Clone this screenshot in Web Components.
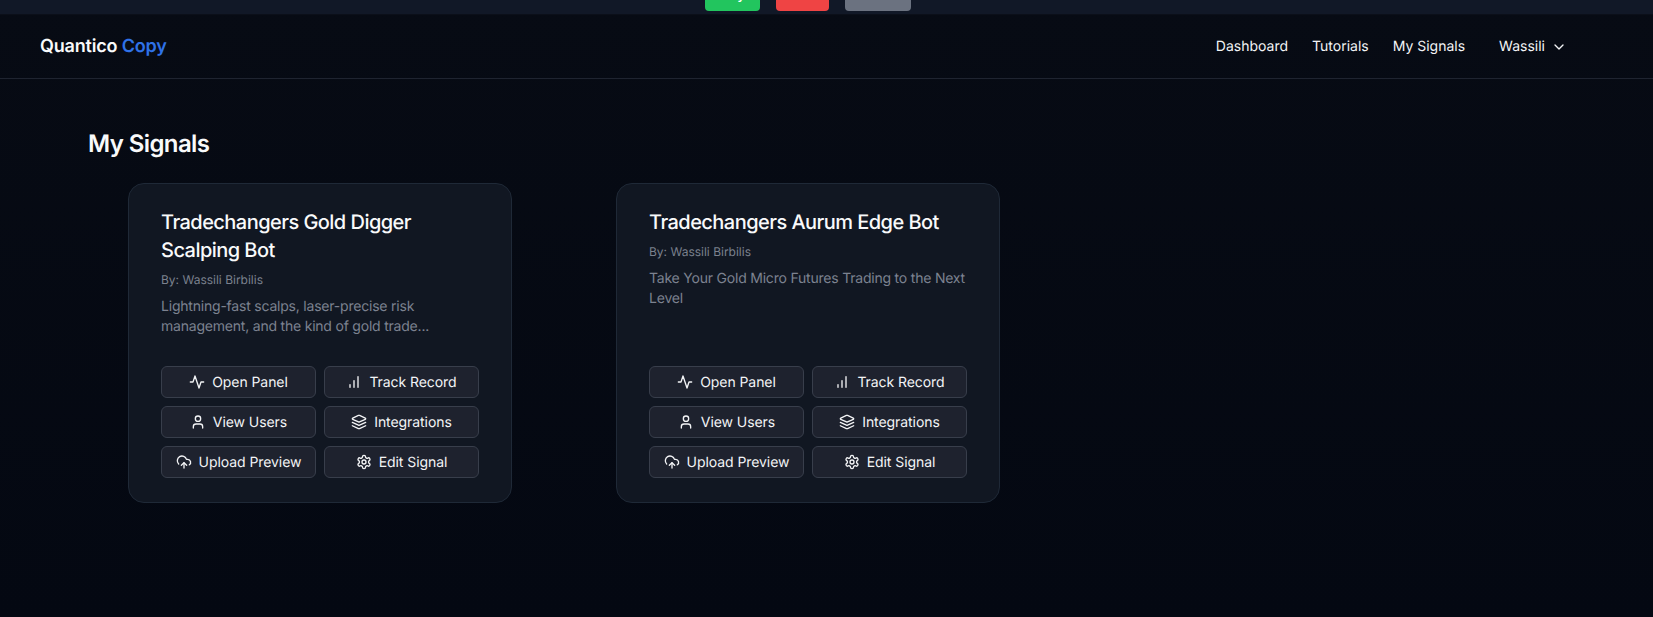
<!DOCTYPE html>
<html lang="en">
<head>
<meta charset="utf-8">
<title>My Signals</title>
<style>
html, body {
  margin: 0;
  height: 100%;
}
body {
  background:     linear-gradient(#070b14, #040812);
  font-family:    Inter, "Liberation Sans", sans-serif;
  color:          #f3f4f6;
  text-rendering: geometricPrecision;
}
</style>
</head>
<body>
<trade-bar></trade-bar>
<top-nav></top-nav>
<signals-page></signals-page>

<script>
const icons = {
  activity: `<path d="M22 12h-4l-3 9L9 3l-3 9H2"/>`,
  chart:    `<path d="M6 20v-4"/><path d="M12 20V10"/><path d="M18 20V4"/>`,
  user:     `<path d="M19 21v-2a4 4 0 0 0-4-4H9a4 4 0 0 0-4 4v2"/><circle cx="12" cy="7" r="4"/>`,
  layers:   `<path d="M12.83 2.18a2 2 0 0 0-1.66 0L2.6 6.08a1 1 0 0 0 0 1.83l8.58 3.91a2 2 0 0 0 1.66 0l8.58-3.9a1 1 0 0 0 0-1.83Z"/><path d="m22 17.65-9.17 4.16a2 2 0 0 1-1.66 0L2 17.65"/><path d="m22 12.65-9.17 4.16a2 2 0 0 1-1.66 0L2 12.65"/>`,
  upload:   `<path d="M12 13v8"/><path d="M4 14.9A7 7 0 1 1 15.7 8h1.8a4.5 4.5 0 0 1 2.5 8.2"/><path d="m8 17 4-4 4 4"/>`,
  gear:     `<path d="M12.22 2h-.44a2 2 0 0 0-2 2v.18a2 2 0 0 1-1 1.73l-.43.25a2 2 0 0 1-2 0l-.15-.08a2 2 0 0 0-2.73.73l-.22.38a2 2 0 0 0 .73 2.73l.15.1a2 2 0 0 1 1 1.72v.51a2 2 0 0 1-1 1.74l-.15.09a2 2 0 0 0-.73 2.73l.22.38a2 2 0 0 0 2.73.73l.15-.08a2 2 0 0 1 2 0l.43.25a2 2 0 0 1 1 1.73V20a2 2 0 0 0 2 2h.44a2 2 0 0 0 2-2v-.18a2 2 0 0 1 1-1.73l.43-.25a2 2 0 0 1 2 0l.15.08a2 2 0 0 0 2.73-.73l.22-.39a2 2 0 0 0-.73-2.73l-.15-.08a2 2 0 0 1-1-1.74v-.5a2 2 0 0 1 1-1.74l.15-.09a2 2 0 0 0 .73-2.73l-.22-.38a2 2 0 0 0-2.73-.73l-.15.08a2 2 0 0 1-2 0l-.43-.25a2 2 0 0 1-1-1.73V4a2 2 0 0 0-2-2z"/><circle cx="12" cy="12" r="3"/>`,
  chevron:  `<path d="m6 9 6 6 6-6"/>`,
}

const svgIcon = (name, size = 16) => `<svg width="${size}" height="${size}" viewBox="0 0 24 24" fill="none" stroke="currentColor" stroke-width="2" stroke-linecap="round" stroke-linejoin="round">${icons[name]}</svg>`

class TradeBar extends HTMLElement {
  constructor() {
    super()
    this.attachShadow({mode: 'open'})
    this.shadowRoot.innerHTML = `
<style>
:host {
  display:         flex;
  justify-content: center;
  align-items:     flex-end;
  gap:             16px;
  height:          14px;
  padding:         0 37px 3px 0;
  box-sizing:      border-box;
  overflow:        hidden;
  background:      #111827;
}
button {
  flex:          none;
  height:        36px;
  padding:       0;
  border:        none;
  border-radius: 4px;
  color:         white;
  font:          500 14px Inter, "Liberation Sans", sans-serif;
}
.buy   { width: 55px; background: #22c55e; }
.sell  { width: 53px; background: #ef4444; }
.close { width: 66px; background: #6b7280; }
</style>
<button class='buy'>Buy</button>
<button class='sell'></button>
<button class='close'></button>`
  }
}

class TopNav extends HTMLElement {
  constructor() {
    super()
    this.attachShadow({mode: 'open'})
    this.shadowRoot.innerHTML = `
<style>
:host {
  display:       flex;
  align-items:   center;
  height:        65px;
  padding:       0 86px 0 40px;
  box-sizing:    border-box;
  border-top:    1px solid #0b0f19;
  border-bottom: 1px solid #1f2430;
}
.logo {
  font-size:      18px;
  font-weight:    600;
  letter-spacing: -0.01em;
  color:          #f9fafb;
}
.logo span {
  color: #2f72e8;
}
nav {
  margin-left: auto;
  display:     flex;
  align-items: center;
  gap:         24px;
  font-size:   14px;
  font-weight: 400;
  color:       #f3f4f6;
}
.user {
  display:     flex;
  align-items: center;
  gap:         6px;
  margin-left: 10px;
}
</style>
<div class='logo'>Quantico <span>Copy</span></div>
<nav>
  <span>Dashboard</span>
  <span>Tutorials</span>
  <span>My Signals</span>
  <span class='user'>Wassili ${svgIcon('chevron')}</span>
</nav>`
  }
}

class ActionButton extends HTMLElement {
  constructor() {
    super()
    this.attachShadow({mode: 'open'})
    this.shadowRoot.innerHTML = `
<style>
:host {
  display:         flex;
  align-items:     center;
  justify-content: center;
  gap:             7px;
  height:          32px;
  box-sizing:      border-box;
  border:          1px solid #383e4b;
  border-radius:   6px;
  background:      #1e222e;
  color:           #f3f4f6;
  font-size:       14px;
  font-weight:     400;
  letter-spacing:  -0.005em;
}
svg { flex: none; }
</style>
${svgIcon(this.getAttribute('icon'))}<slot></slot>`
  }
}

class SignalCard extends HTMLElement {
  constructor() {
    super()
    this.attachShadow({mode: 'open'})
    this.shadowRoot.innerHTML = `
<style>
:host {
  display:        flex;
  flex-direction: column;
  width:          384px;
  height:         320px;
  padding:        24px 32px;
  box-sizing:     border-box;
  border:         1px solid #1f2937;
  border-radius:  16px;
  background:     #111722;
}
h3 {
  margin:         0 0 8px;
  font-size:      20px;
  line-height:    28px;
  font-weight:    550;
  letter-spacing: -0.027em;
  color:          #f9fafb;
}
.by {
  font-size:   12px;
  line-height: 16px;
  color:       #7b818e;
}
.desc {
  margin:         9px 0 0;
  font-size:      14px;
  line-height:    20px;
  font-weight:    400;
  letter-spacing: -0.015em;
  color:          #7c8290;
}
.actions {
  margin-top:            auto;
  display:               grid;
  grid-template-columns: repeat(2, 155px);
  gap:                   8px;
}
</style>
<h3><slot name='title'></slot></h3>
<div class='by'><slot name='by'></slot></div>
<p class='desc'><slot name='desc'></slot></p>
<div class='actions'>
  <action-button icon='activity'>Open Panel</action-button>
  <action-button icon='chart'>Track Record</action-button>
  <action-button icon='user'>View Users</action-button>
  <action-button icon='layers'>Integrations</action-button>
  <action-button icon='upload'>Upload Preview</action-button>
  <action-button icon='gear'>Edit Signal</action-button>
</div>`
  }
}

class SignalsPage extends HTMLElement {
  constructor() {
    super()
    this.attachShadow({mode: 'open'})
    this.shadowRoot.innerHTML = `
<style>
:host {
  display: block;
  padding: 49px 88px;
}
h2 {
  margin:         0 0 23px;
  font-size:      24px;
  line-height:    32px;
  font-weight:    600;
  letter-spacing: -0.025em;
  color:          #f9fafb;
}
.cards {
  display:      flex;
  gap:          104px;
  padding-left: 40px;
}
</style>
<h2>My Signals</h2>
<div class='cards'>
  <signal-card>
    <span slot='title'>Tradechangers Gold Digger Scalping Bot</span>
    <span slot='by'>By: Wassili Birbilis</span>
    <span slot='desc'>Lightning-fast scalps, laser-precise risk management, and the kind of gold trade...</span>
  </signal-card>
  <signal-card>
    <span slot='title'>Tradechangers Aurum Edge Bot</span>
    <span slot='by'>By: Wassili Birbilis</span>
    <span slot='desc'>Take Your Gold Micro Futures Trading to the Next Level</span>
  </signal-card>
</div>`
  }
}

customElements.define('trade-bar', TradeBar)
customElements.define('top-nav', TopNav)
customElements.define('action-button', ActionButton)
customElements.define('signal-card', SignalCard)
customElements.define('signals-page', SignalsPage)
</script>
</body>
</html>
